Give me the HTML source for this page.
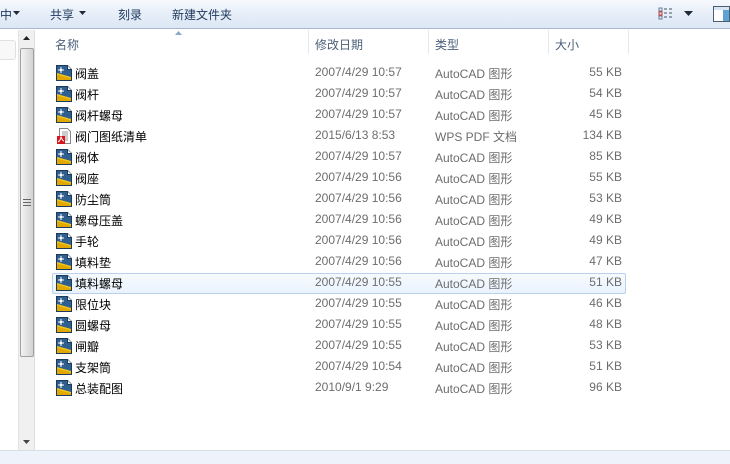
<!DOCTYPE html>
<html><head><meta charset="utf-8"><style>
*{margin:0;padding:0;box-sizing:border-box}
body{width:730px;height:464px;overflow:hidden;background:#fff;font-family:"Liberation Sans","Noto Sans CJK SC",sans-serif;font-size:12px;position:relative}
.tb{position:absolute;left:0;top:0;width:730px;height:29px;background:linear-gradient(#f6f9fd,#e6eef8 50%,#dce7f5);border-bottom:1px solid #a9b8cf}
.tb span{position:absolute;top:6px;color:#1e395b;font-size:12px}
.nav{position:absolute;left:0;top:30px;width:35px;height:420px;background:#fff;border-right:1px solid #d5dfe5}
.sb{position:absolute;left:18px;top:30px;width:16px;height:420px;background:#f0f0f0;border-left:1px solid #e3e3e3}
.thumb{position:absolute;left:1px;top:18px;width:14px;height:309px;border:1px solid #a0a0a0;border-radius:2px;background:linear-gradient(90deg,#f3f3f3,#e0e0e0 60%,#d2d2d2)}
.hdr{position:absolute;top:30px;height:23px;color:#4c607a;font-size:12px}
.sep{position:absolute;top:30px;width:1px;height:24px;background:#e3e8ef}
.row{position:absolute;left:52px;width:574px;height:21px}
.row.sel{background:linear-gradient(#f7fbff,#e9f2fd);box-shadow:inset 0 0 0 1px #b9d1ea;border-radius:2px}
.row .n{position:absolute;left:23px;top:2px;color:#000}
.row .d{position:absolute;left:263px;top:2px;color:#6d6d6d}
.row .t{position:absolute;left:383px;top:2px;color:#6d6d6d}
.row .s{position:absolute;right:4px;top:2px;color:#6d6d6d}
.ic{position:absolute;left:4px;top:2px}
.foot{position:absolute;left:0;top:450px;width:730px;height:14px;background:#eef2fb;border-top:1px solid #d5dfe5}
</style></head><body>
<div class="tb">
<span style="left:0">中</span>
<svg style="position:absolute;left:13px;top:11px" width="7" height="4"><path d="M0 0h7L3.5 4z" fill="#1e2b3c"/></svg>
<span style="left:50px">共享</span>
<svg style="position:absolute;left:79px;top:11px" width="7" height="4"><path d="M0 0h7L3.5 4z" fill="#1e2b3c"/></svg>
<span style="left:118px">刻录</span>
<span style="left:172px">新建文件夹</span>
<svg style="position:absolute;left:658px;top:7px" width="16" height="14"><rect x="1" y="1" width="3" height="3" fill="none" stroke="#6a7d99"/><rect x="1" y="5" width="3" height="3" fill="none" stroke="#c33"/><rect x="1" y="9" width="3" height="3" fill="none" stroke="#6a7d99"/><path d="M6 2h3M11 2h3M6 6h3M11 6h3M6 10h3M11 10h3" stroke="#44546a"/></svg>
<svg style="position:absolute;left:684px;top:11px" width="9" height="5"><path d="M0 0h9L4.5 5z" fill="#1e2b3c"/></svg>
<svg style="position:absolute;left:713px;top:6px" width="17" height="16"><rect x=".5" y=".5" width="16" height="15" fill="#fff" stroke="#4e5d70"/><rect x="1" y="1" width="15" height="3" fill="#d8e4f2"/><rect x="10" y="4" width="6" height="11" fill="#5fa3d3"/></svg>
</div>
<div class="nav"><div style="position:absolute;left:-4px;top:10px;width:20px;height:20px;border:1px solid #e0e0e0;border-radius:3px;background:#f8f8f8"></div></div>
<div class="sb">
<svg style="position:absolute;left:4px;top:6px" width="7" height="4"><path d="M3.5 0L7 4H0z" fill="#222"/></svg>
<div class="thumb"><svg style="position:absolute;left:2px;top:150px" width="8" height="7"><path d="M0 .5h8M0 3.5h8M0 6.5h8" stroke="#666"/></svg></div>
<svg style="position:absolute;left:4px;top:410px" width="7" height="4"><path d="M0 0h7L3.5 4z" fill="#444"/></svg>
</div>
<svg style="position:absolute;left:175px;top:31px" width="7" height="4"><path d="M3.5 0L7 4H0z" fill="#8aa8cc"/></svg>
<div class="hdr" style="left:55px;top:36px">名称</div>
<div class="hdr" style="left:315px;top:36px">修改日期</div>
<div class="hdr" style="left:435px;top:36px">类型</div>
<div class="hdr" style="left:555px;top:36px">大小</div>
<div class="sep" style="left:308px"></div><div class="sep" style="left:428px"></div><div class="sep" style="left:548px"></div><div class="sep" style="left:628px"></div>
<svg width="0" height="0" style="position:absolute"><defs>
<symbol id="cad" viewBox="0 0 16 16"><path d="M.5 .5h11l4 4v11H.5z" fill="#2f5f8f" stroke="#1c3a5c"/><path d="M1 8L15 12V15H1z" fill="#f5c518"/><path d="M1 9.5L15 13.5V15H1z" fill="#e0a800"/><path d="M11.5 .5v4h4" fill="#fff" stroke="#1c3a5c"/><path d="M5 2v6M2 5h6" stroke="#fff"/><circle cx="5" cy="5" r="1.3" fill="#fff"/></symbol>
<symbol id="pdf" viewBox="0 0 16 16"><path d="M3.5 .5h8l3 3v12h-11z" fill="#fff" stroke="#888"/><path d="M6 4h6M6 6h6M6 8h6M9 10h3M9 12h3" stroke="#999"/><rect x="1" y="8" width="8" height="8" fill="#d8141c"/><path d="M2 14c2-1 3-4 3-5s1 4 3 4" stroke="#fff" fill="none"/></symbol>
</defs></svg>
<div id="rows"></div>
<div class="foot"></div>
<script>
var d=[["阀盖","2007/4/29 10:57","55 KB"],["阀杆","2007/4/29 10:57","54 KB"],["阀杆螺母","2007/4/29 10:57","45 KB"],["阀门图纸清单","2015/6/13 8:53","134 KB",1],["阀体","2007/4/29 10:57","85 KB"],["阀座","2007/4/29 10:56","55 KB"],["防尘筒","2007/4/29 10:56","53 KB"],["螺母压盖","2007/4/29 10:56","49 KB"],["手轮","2007/4/29 10:56","49 KB"],["填料垫","2007/4/29 10:56","47 KB"],["填料螺母","2007/4/29 10:55","51 KB"],["限位块","2007/4/29 10:55","46 KB"],["圆螺母","2007/4/29 10:55","48 KB"],["闸瓣","2007/4/29 10:55","53 KB"],["支架筒","2007/4/29 10:54","51 KB"],["总装配图","2010/9/1 9:29","96 KB"]];
var h="";d.forEach(function(r,i){var y=63+i*21;h+='<div class="row'+(i==10?' sel':'')+'" style="top:'+y+'px"><svg class="ic" width="16" height="16"><use href="#'+(r[3]?'pdf':'cad')+'"/></svg><span class="n">'+r[0]+'</span><span class="d">'+r[1]+'</span><span class="t">'+(r[3]?'WPS PDF 文档':'AutoCAD 图形')+'</span><span class="s">'+r[2]+'</span></div>';});
document.getElementById("rows").innerHTML=h;
</script>
</body></html>
